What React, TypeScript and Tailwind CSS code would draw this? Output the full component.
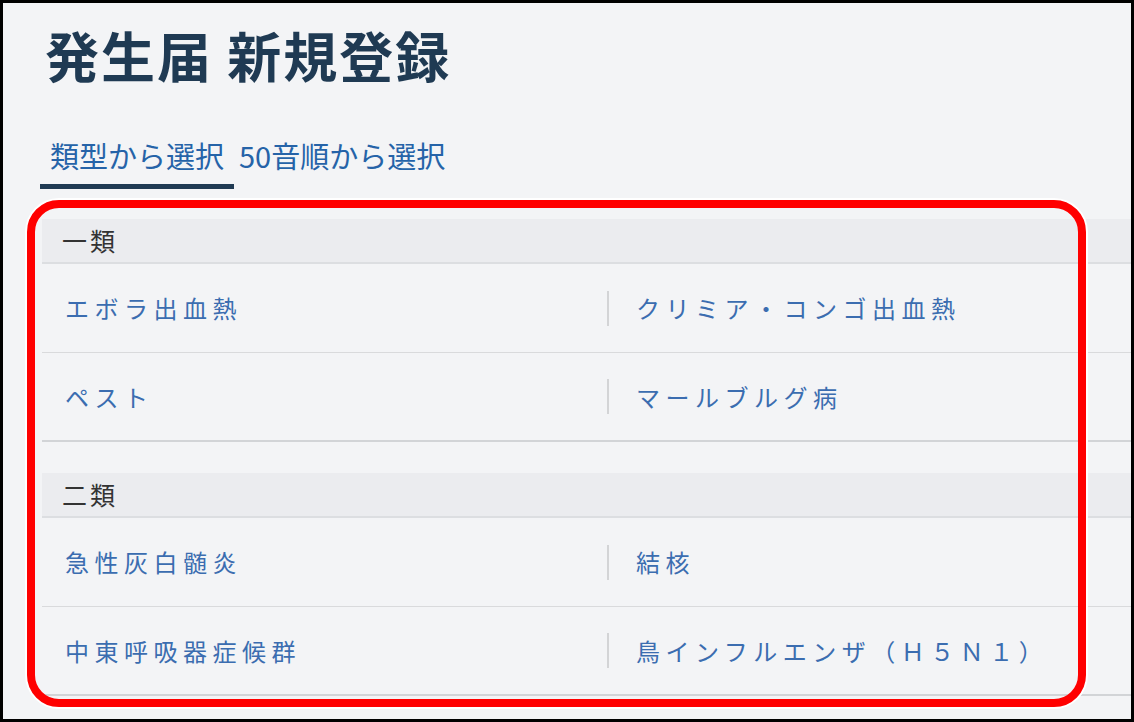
import { useState } from 'react';

type Disease = { left: string; right: string };
type Group = { name: string; rows: Disease[] };

const groups: Group[] = [
  {
    name: '一類',
    rows: [
      { left: 'エボラ出血熱', right: 'クリミア・コンゴ出血熱' },
      { left: 'ペスト', right: 'マールブルグ病' },
    ],
  },
  {
    name: '二類',
    rows: [
      { left: '急性灰白髄炎', right: '結核' },
      { left: '中東呼吸器症候群', right: '鳥インフルエンザ（Ｈ５Ｎ１）' },
    ],
  },
];

const font = { fontFamily: '"Noto Sans CJK JP", "Noto Sans", sans-serif' };

export default function App() {
  const [tab, setTab] = useState<'type' | 'kana'>('type');

  return (
    <div className="relative h-[722px] w-[1134px] overflow-hidden border-[3px] border-black bg-[#f3f4f6]" style={font}>
      <div className="pl-[42px] pt-[20px]">
        <h1 className="text-[54px] font-bold leading-[64px] tracking-[2px] text-[#1f3a53]">発生届 新規登録</h1>
        <div className="ml-[-5px] mt-[50px] flex text-[29px] leading-[36px] text-[#2563a8]">
          <button onClick={() => setTab('type')} className={`px-[10px] pb-[11px] border-b-[5px] ${tab === 'type' ? 'border-[#1f3a53]' : 'border-transparent'}`}>
            類型から選択
          </button>
          <button onClick={() => setTab('kana')} className={`pl-[5px] pr-[10px] pb-[11px] border-b-[5px] ${tab === 'kana' ? 'border-[#1f3a53]' : 'border-transparent'}`}>
            50音順から選択
          </button>
        </div>
      </div>

      <div className="ml-[39px] mt-[30px]">
        {groups.map((group, gi) => (
          <section key={group.name} className={gi > 0 ? 'mt-[31px]' : ''}>
            <div className="flex h-[45px] items-center border-b-2 border-[#dcdee1] bg-[#ebecef] pl-[20px] text-[25px] tracking-[3px] text-[#333333]">
              {group.name}
            </div>
            {group.rows.map((row, ri) => (
              <div
                key={row.left}
                className={`grid h-[89px] grid-cols-[565px_1fr] items-center ${ri === group.rows.length - 1 ? 'border-b-2 border-[#d2d4d7]' : 'border-b border-[#d9dadc]'}`}
              >
                <a href="#" className="pl-[23px] text-[24px] tracking-[5.5px] text-[#3b6db0]">{row.left}</a>
                <div className="flex items-center">
                  <span className="h-[35px] w-[2px] bg-[#d3d4d6]" />
                  <a href="#" className="pl-[27px] text-[24px] tracking-[5.5px] text-[#3b6db0]">{row.right}</a>
                </div>
              </div>
            ))}
          </section>
        ))}
      </div>

      {/* annotation frame drawn over the list */}
      <div className="pointer-events-none absolute left-[24px] top-[197px] h-[507px] w-[1059px] rounded-[32px] border-[8px] border-[#ff0000] shadow-[0_0_0_2px_#ffffff]" />
    </div>
  );
}
